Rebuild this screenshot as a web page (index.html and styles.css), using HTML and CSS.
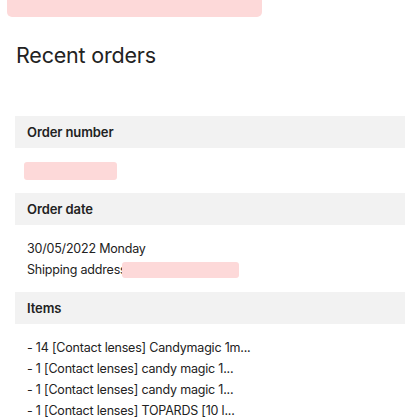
FILE: index.html
```html
<!DOCTYPE html>
<html>
<head>
<meta charset="utf-8">
<link rel="stylesheet" href="styles.css">
</head>
<body>
<div class="topbar"></div>
<main class="page">
  <h1 class="title">Recent orders</h1>
  <section class="block">
    <div class="band">Order number</div>
    <div class="content content-first">
      <div class="line"><span class="redact redact-number"></span></div>
    </div>
  </section>
  <section class="block">
    <div class="band">Order date</div>
    <div class="content">
      <div class="line">30/05/2022 Monday</div>
      <div class="line">Shipping address<span class="redact redact-address"></span></div>
    </div>
  </section>
  <section class="block">
    <div class="band">Items</div>
    <div class="content">
      <div class="line">- 14 [Contact lenses] Candymagic 1m...</div>
      <div class="line">- 1 [Contact lenses] candy magic 1...</div>
      <div class="line">- 1 [Contact lenses] candy magic 1...</div>
      <div class="line">- 1 [Contact lenses] TOPARDS [10 l...</div>
    </div>
  </section>
</main>
</body>
</html>
```

FILE: styles.css
```css
html, body {
  margin: 0;
  padding: 0;
  background: #ffffff;
}
body {
  font-family: Inter, "Noto Sans", "Liberation Sans", sans-serif;
  color: #222222;
  overflow: hidden;
}
.topbar {
  margin-left: 7px;
  width: 255px;
  height: 17px;
  background: #fdd9d9;
  border-radius: 0 0 5px 5px;
}
.page {
  padding: 0 15px;
}
.title {
  margin: 24px 0 0 1px;
  font-size: 21.5px;
  line-height: 28px;
  font-weight: 400;
  letter-spacing: -0.2px;
  color: #222222;
}
.block:first-of-type {
  margin-top: 47px;
}
.band {
  background: #f2f2f2;
  height: 32px;
  line-height: 33px;
  padding-left: 12px;
  font-size: 13px;
  font-weight: 600;
  letter-spacing: -0.1px;
  color: #222222;
}
.content {
  padding: 13px 12px 12px;
  font-size: 12.5px;
  letter-spacing: -0.2px;
  color: #222222;
}
.content-first {
  padding-top: 12px;
}
.line {
  height: 21px;
  line-height: 21px;
  white-space: nowrap;
  display: flex;
  align-items: center;
}
.redact {
  display: block;
  background: #fdd9d9;
  border-radius: 3px;
}
.redact-number {
  width: 93px;
  height: 18px;
  margin-left: -3px;
}
.redact-address {
  width: 117px;
  height: 16px;
  margin-left: -4px;
}
```
